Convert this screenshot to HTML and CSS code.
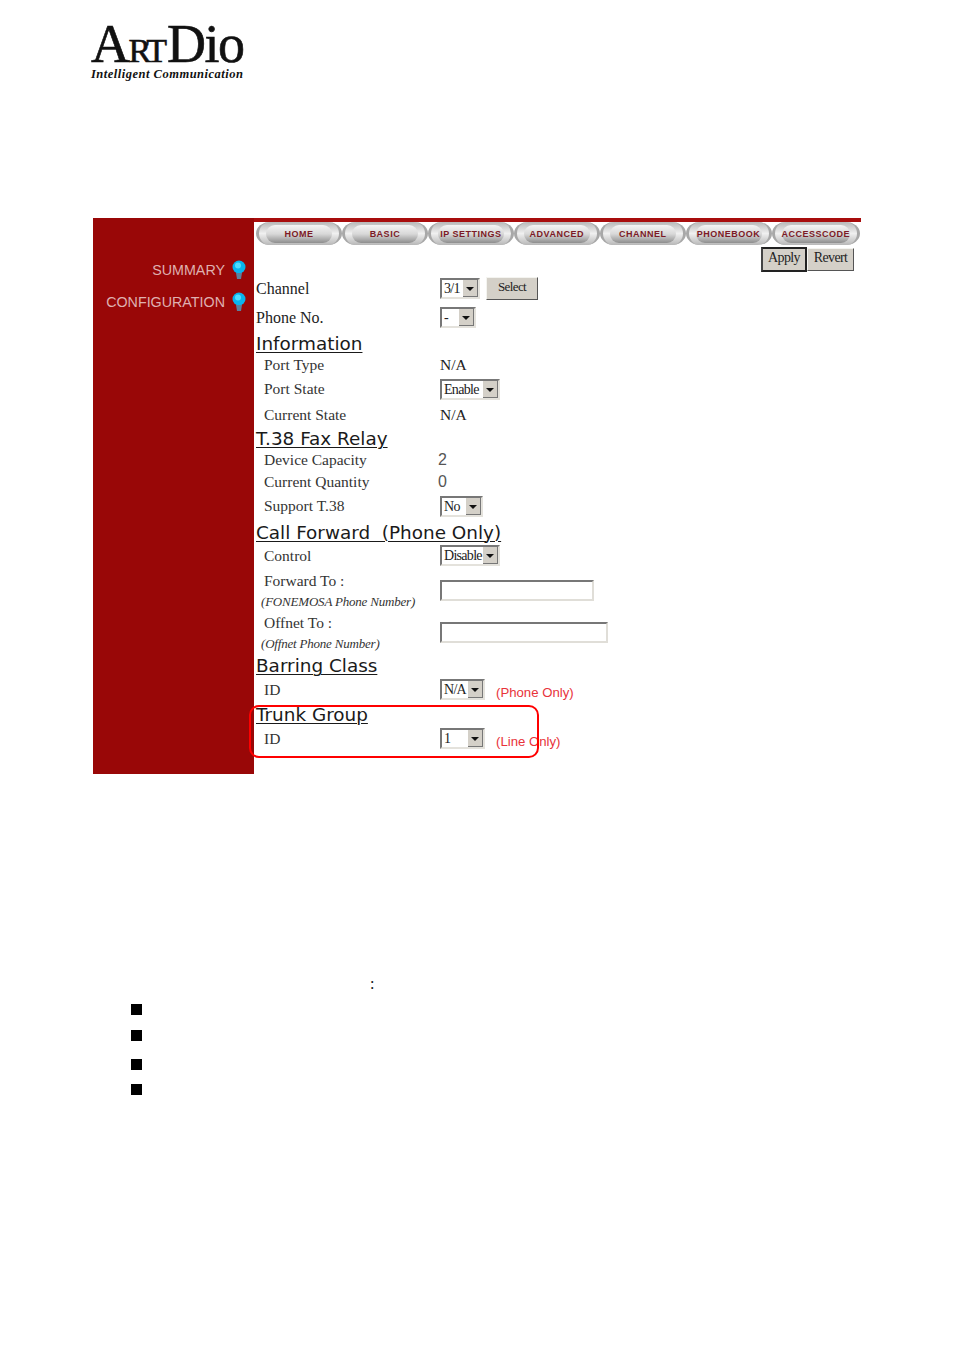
FILE: index.html
```html
<!DOCTYPE html>
<html lang="en">
  <head>
    <meta charset="UTF-8" />
    <meta name="viewport" content="width=device-width, initial-scale=1.0" />
    <title>ArtDio Channel Settings</title>
    <link rel="stylesheet" href="styles.css">
  </head>
  <body>
    <header class="logo">
      <div class="logo-name"><span>A</span><span class="logo-small">RT</span><span>Dio</span></div>
      <div class="logo-tag">Intelligent Communication</div>
    </header>

    <div class="panel">
      <aside class="sidebar">
        <a class="side-link">SUMMARY
          <svg class="bulb" viewBox="0 0 14 20"><circle cx="7" cy="7" r="6.5" fill="#08b4ee"/><circle cx="6" cy="5.5" r="3" fill="#4fdcff"/><path d="M4 13h6l-1 6H5z" fill="#5c7f9c"/></svg>
        </a>
        <a class="side-link">CONFIGURATION
          <svg class="bulb" viewBox="0 0 14 20"><circle cx="7" cy="7" r="6.5" fill="#08b4ee"/><circle cx="6" cy="5.5" r="3" fill="#4fdcff"/><path d="M4 13h6l-1 6H5z" fill="#5c7f9c"/></svg>
        </a>
      </aside>

      <main class="main">
        <nav class="tabs">
          <a class="tab"><span>HOME</span></a>
          <a class="tab"><span>BASIC</span></a>
          <a class="tab"><span>IP SETTINGS</span></a>
          <a class="tab"><span>ADVANCED</span></a>
          <a class="tab"><span>CHANNEL</span></a>
          <a class="tab"><span>PHONEBOOK</span></a>
          <a class="tab"><span>ACCESSCODE</span></a>
        </nav>

        <div class="actions">
          <button class="btn btn-default">Apply</button>
          <button class="btn">Revert</button>
        </div>

        <div class="form">
          <div class="label top">Channel</div>
          <div class="value"><div class="select w-40">3/1<i></i></div><button class="btn btn-select">Select</button></div>
          <div class="label top">Phone No.</div>
          <div class="value"><div class="select w-36">-<i></i></div></div>

          <h2 class="section">Information</h2>
          <div class="label">Port Type</div>
          <div class="value">N/A</div>
          <div class="label">Port State</div>
          <div class="value"><div class="select w-60">Enable<i></i></div></div>
          <div class="label">Current State</div>
          <div class="value">N/A</div>

          <h2 class="section">T.38 Fax Relay</h2>
          <div class="label">Device Capacity</div>
          <div class="value num">2</div>
          <div class="label">Current Quantity</div>
          <div class="value num">0</div>
          <div class="label">Support T.38</div>
          <div class="value"><div class="select w-43">No<i></i></div></div>

          <h2 class="section">Call Forward&nbsp; (Phone Only)</h2>
          <div class="label">Control</div>
          <div class="value"><div class="select w-60">Disable<i></i></div></div>
          <div class="label">Forward To :</div>
          <div class="value span-2"><input class="field w-154" type="text" /></div>
          <div class="label hint">(FONEMOSA Phone Number)</div>
          <div class="label">Offnet To :</div>
          <div class="value span-2"><input class="field w-168" type="text" /></div>
          <div class="label hint">(Offnet Phone Number)</div>

          <h2 class="section">Barring Class</h2>
          <div class="label">ID</div>
          <div class="value"><div class="select w-45">N/A<i></i></div><span class="note">(Phone Only)</span></div>

          <h2 class="section">Trunk Group</h2>
          <div class="label">ID</div>
          <div class="value"><div class="select w-45">1<i></i></div><span class="note">(Line Only)</span></div>
        </div>
      </main>

      <div class="highlight"></div>
    </div>

    <div class="colon">:</div>
    <div class="bullets">
      <div class="bullet"></div>
      <div class="bullet"></div>
      <div class="bullet"></div>
      <div class="bullet"></div>
    </div>
  </body>
</html>
```

FILE: styles.css
```css
body {
  margin: 0;
  background-color: #fff;
  color: #222;
  font-family: "Liberation Serif", serif;
}
.logo {
  height: 218px;
  box-sizing: border-box;
  padding: 21px 0 0 91px;
  color: #111;
}
.logo-name {
  font-size: 54px;
  line-height: 47px;
  height: 47px;
  white-space: nowrap;
  letter-spacing: -1.5px;
  -webkit-text-stroke: 0.6px #111;
}
.logo-small {
  font-size: 34px;
  letter-spacing: -3px;
  margin-right: 3px;
}
.logo-tag {
  font-size: 12.5px;
  font-weight: bold;
  font-style: italic;
  line-height: 13px;
  letter-spacing: 0.5px;
}
.panel {
  position: relative;
  display: flex;
  width: 768px;
  height: 556px;
  margin-left: 93px;
}
.sidebar {
  width: 161px;
  box-sizing: border-box;
  padding: 42px 8px 0 0;
  background-color: #990707;
  display: flex;
  flex-direction: column;
  gap: 12px;
}
.side-link {
  display: flex;
  justify-content: flex-end;
  align-items: center;
  gap: 7px;
  height: 20px;
  color: #dfb0b0;
  font-family: "Liberation Sans", sans-serif;
  font-size: 14.3px;
}
.bulb {
  width: 14px;
  height: 20px;
}
.main {
  flex: 1;
  border-top: 4px solid #a80d0d;
}
.tabs {
  display: flex;
  height: 23px;
  padding-left: 2px;
  padding-right: 1px;
  overflow: hidden;
}
.tab {
  flex: 1;
  display: flex;
  box-sizing: border-box;
  padding: 3px 7px 2px;
  border: solid #a8a8a8;
  border-width: 0 3px;
  border-radius: 20px / 16px;
  background: linear-gradient(#b8b8b8, #f0f0f0 50%, #b8b8b8);
}
.tab span {
  flex: 1;
  display: flex;
  align-items: center;
  justify-content: center;
  border-radius: 10px;
  background: linear-gradient(#f4f4f4, #d8d8d8 50%, #8e8e8e);
  color: #7c1a26;
  font-family: "Liberation Sans", sans-serif;
  font-size: 9px;
  font-weight: bold;
  letter-spacing: 0.5px;
  white-space: nowrap;
}
.actions {
  display: flex;
  justify-content: flex-end;
  align-items: center;
  height: 30px;
  padding-right: 7px;
  padding-bottom: 2px;
  box-sizing: border-box;
}
.btn {
  box-sizing: border-box;
  width: 47px;
  height: 23px;
  padding: 0 0 2px;
  background-color: #d4d0c8;
  border: 1px solid;
  border-color: #f4f4f0 #555 #555 #f4f4f0;
  color: #222;
  font-family: "Liberation Serif", serif;
  font-size: 14px;
  letter-spacing: -0.6px;
}
.btn-default {
  width: 46px;
  height: 25px;
  border: 2px solid #222;
  border-color: #222 #222 #222 #444;
}
.btn-select {
  width: 52px;
  margin-left: 6px;
  padding-bottom: 4px;
  font-size: 13px;
}
.form {
  display: grid;
  grid-template-columns: 184px 1fr;
  grid-template-rows: 27px 31px 20px 23px 26px 25px 22px 21px 23px 26px 25px 23px 27px 16px 26px 15px 28px 21px 28px 21px;
  padding-left: 2px;
  font-size: 15.5px;
}
.label {
  display: flex;
  align-items: center;
  padding-left: 8px;
  white-space: nowrap;
  color: #333;
}
.top {
  padding-left: 0;
  font-size: 16px;
  color: #222;
}
.hint {
  padding-left: 5px;
  font-size: 13px;
  font-style: italic;
  letter-spacing: -0.2px;
}
.value {
  display: flex;
  align-items: center;
}
.span-2 {
  grid-row: span 2;
}
.num {
  margin-left: -2px;
  font-family: "Liberation Sans", sans-serif;
  font-size: 16px;
  color: #555;
}
.section {
  grid-column: 1 / 3;
  align-self: center;
  margin: 2px 0 0;
  font-family: "DejaVu Sans", sans-serif;
  font-size: 18.4px;
  font-weight: normal;
  line-height: 20px;
  text-decoration: underline;
  text-decoration-thickness: 1px;
  text-underline-offset: 2px;
  color: #1a1a1a;
  white-space: pre;
}
.select {
  display: flex;
  align-items: center;
  justify-content: space-between;
  box-sizing: border-box;
  height: 21px;
  padding-left: 2px;
  border: 2px solid;
  border-color: #777 #e4e2dc #e4e2dc #777;
  background-color: #fff;
  font-size: 14px;
  letter-spacing: -0.7px;
  line-height: 15px;
}
.select i {
  position: relative;
  width: 15px;
  height: 17px;
  background-color: #d4d0c8;
  border-right: 1px solid #777;
  border-bottom: 1px solid #777;
  box-sizing: border-box;
}
.select i::after {
  content: "";
  position: absolute;
  left: 3px;
  top: 7px;
  border: 4px solid transparent;
  border-top-color: #111;
  border-bottom: 0;
}
.w-36 { width: 36px; }
.w-40 { width: 40px; }
.w-43 { width: 43px; }
.w-45 { width: 45px; }
.w-60 { width: 60px; }
.field {
  box-sizing: border-box;
  height: 21px;
  margin-top: 4px;
  padding: 0;
  border: 2px solid;
  border-color: #777 #e0ded8 #e0ded8 #777;
  background-color: #fff;
}
.w-154 { width: 154px; }
.w-168 { width: 168px; }
.note {
  margin: 6px 0 0 11px;
  color: #e8333a;
  font-family: "Liberation Sans", sans-serif;
  font-size: 13.2px;
}
.highlight {
  position: absolute;
  left: 156px;
  top: 487px;
  width: 286px;
  height: 49px;
  border: 2px solid #f00;
  border-radius: 10px;
}
.colon {
  margin: 200px 0 0 370px;
  height: 20px;
  line-height: 20px;
  font-size: 16px;
  color: #111;
}
.bullets {
  display: flex;
  flex-direction: column;
  margin-left: 131px;
  padding-top: 10px;
}
.bullet {
  width: 11px;
  height: 11px;
  margin-bottom: 15px;
  background-color: #000;
}
.bullet:nth-child(2) {
  margin-bottom: 18px;
}
.bullet:nth-child(3) {
  margin-bottom: 14px;
}
```
